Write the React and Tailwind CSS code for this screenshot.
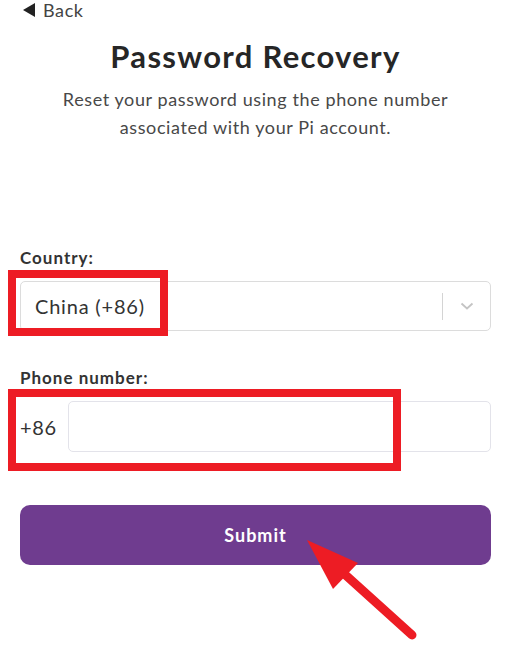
import React from 'react';

const RED = '#ed1c24';

const App = () => {
  return (
    <div className="relative w-[516px] h-[667px] bg-white overflow-hidden font-['Lato',sans-serif] text-[#333]">
      <div className="pl-5 pr-[25px]">
        {/* back link */}
        <div className="h-5 flex items-center gap-[7px] text-[18px] leading-5 tracking-[0.6px] text-[#444]">
          <svg width="14" height="14" viewBox="0 0 14 14" className="ml-[2px]">
            <path d="M13 0 L13 14 L1 7 Z" fill="#222" />
          </svg>
          <span>Back</span>
        </div>

        <h1 className="mt-[18px] text-center text-[31px] leading-[36px] tracking-[1.3px] font-bold text-[#262626]">
          Password Recovery
        </h1>
        <p className="mt-[11px] text-center text-[18px] leading-[28px] tracking-[0.6px] text-[#484848] px-[20px]">
          Reset your password using the phone number associated with your Pi account.
        </p>

        <label className="block mt-[107px] text-[17px] leading-5 tracking-[1px] font-bold text-[#333]">Country:</label>
        <div className="mt-[13px] h-[50px] flex items-center border border-[#dcdcdc] rounded-[5px]">
          <span className="flex-1 pl-[14px] text-[20px] tracking-[0.8px] text-[#333]">China (+86)</span>
          <span className="w-px h-[27px] bg-[#d4d4d4]" />
          <span className="w-[47px] flex justify-center">
            <svg width="14" height="8" viewBox="0 0 14 8">
              <path d="M1.5 1.5 L7 6.5 L12.5 1.5" fill="none" stroke="#c4c4c4" strokeWidth="1.8" />
            </svg>
          </span>
        </div>

        <label className="block mt-[37px] text-[17px] leading-5 tracking-[1px] font-bold text-[#333]">Phone number:</label>
        <div className="mt-[13px] h-[51px] flex items-center">
          <span className="w-12 text-[20px] tracking-[0.6px] text-[#333]">+86</span>
          <input className="flex-1 h-full border border-[#e3e3ea] rounded-[5px] outline-none px-3" />
        </div>

        <button className="mt-[53px] w-full h-[60px] rounded-[10px] bg-[#6f3c8f] text-white text-[18px] tracking-[1px] font-bold">
          Submit
        </button>
      </div>

      {/* annotation overlays */}
      <div className="absolute left-[8px] top-[270px] w-[160px] h-[66px] border-[8px] border-[#ed1c24]" />
      <div className="absolute left-[8px] top-[389px] w-[393px] h-[82px] border-[8px] border-[#ed1c24]" />
      <svg className="absolute left-0 top-0" width="516" height="667" viewBox="0 0 516 667">
        <line x1="412" y1="635" x2="340" y2="570" stroke={RED} strokeWidth="9" strokeLinecap="round" />
        <path d="M307 540 L333 589 L358 563 Z" fill={RED} />
      </svg>
    </div>
  );
};

export default App;
